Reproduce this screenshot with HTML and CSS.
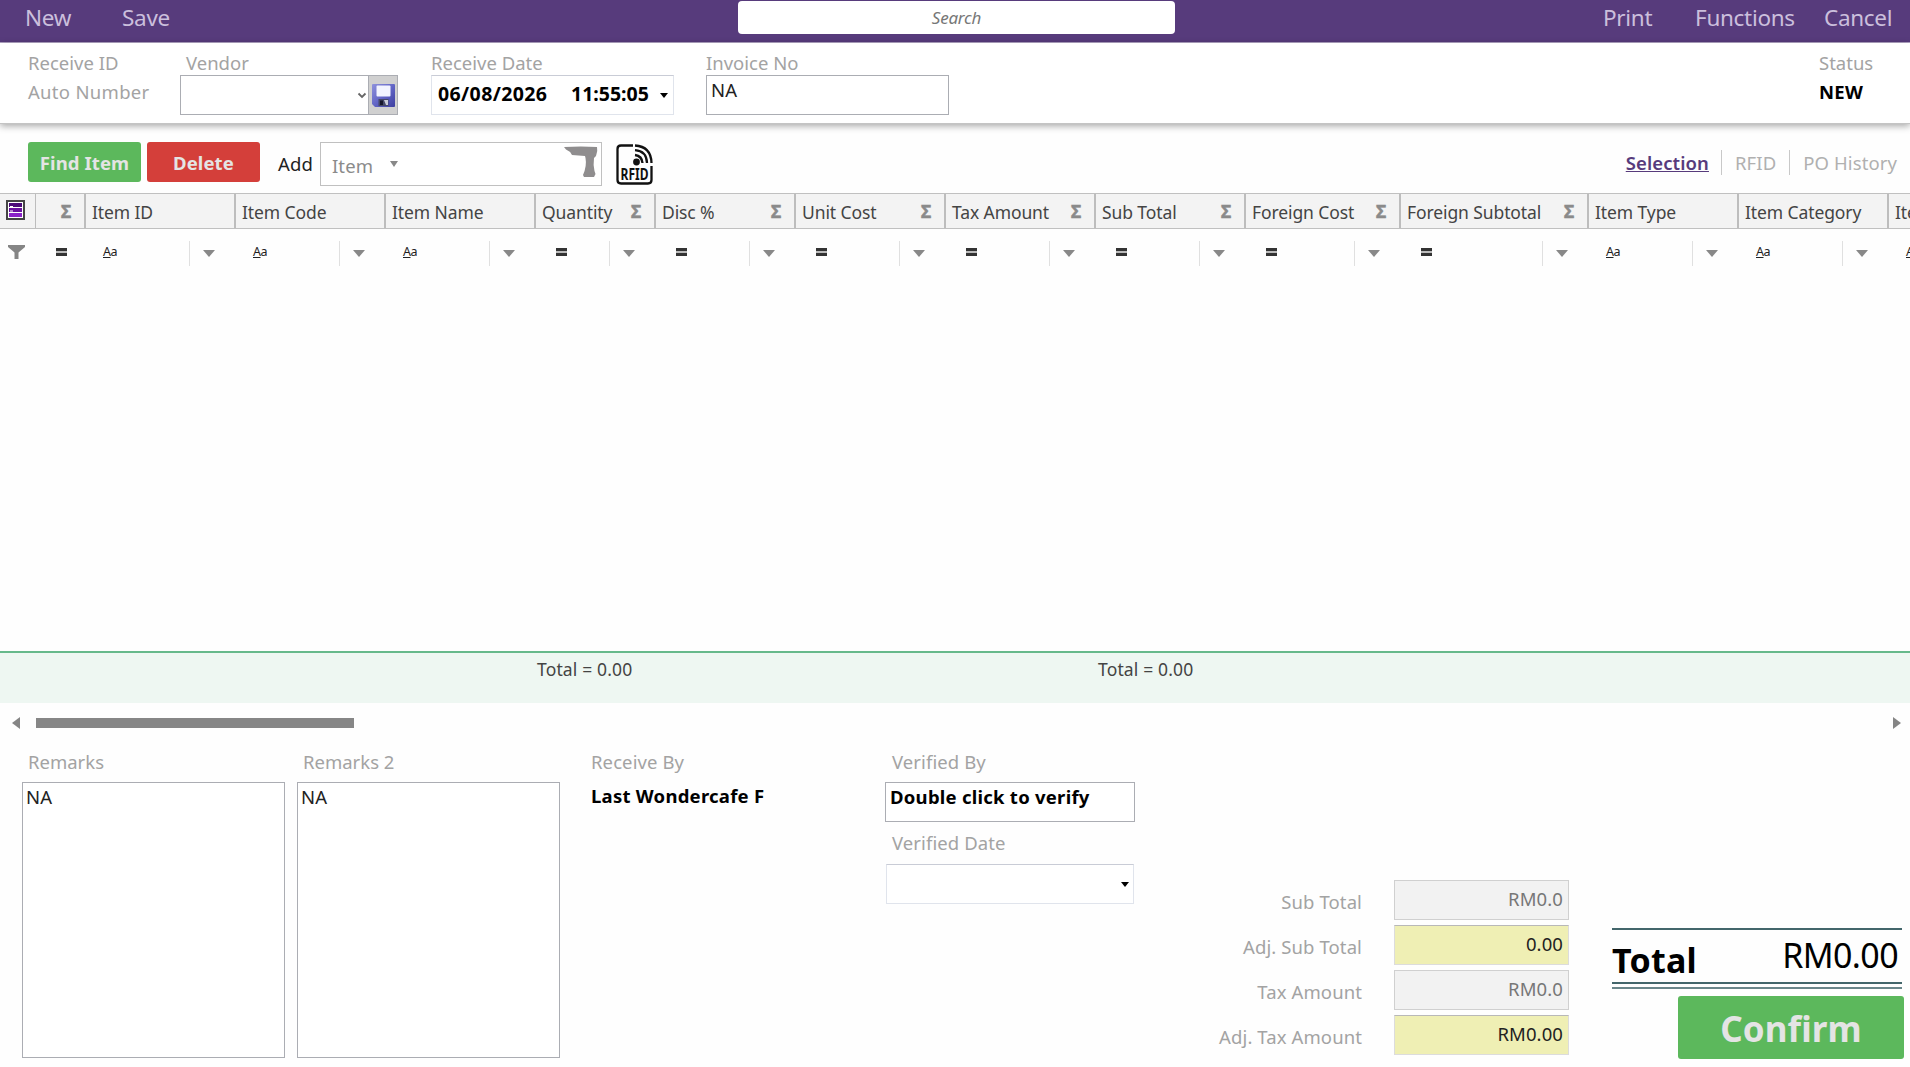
FILE: index.html
```
<!DOCTYPE html>
<html lang="en">
<head>
    <meta charset="UTF-8">
    <meta name="viewport" content="width=device-width, initial-scale=1.0">
    <title>Receive</title>
    <link rel="stylesheet" href="styles.css">
</head>
<body>
    <header class="topbar">
        <nav class="menu">
            <a class="menu-new">New</a>
            <a class="menu-save">Save</a>
        </nav>
        <div class="search">Search</div>
        <nav class="menu menu-right">
            <a class="menu-print">Print</a>
            <a class="menu-functions">Functions</a>
            <a class="menu-cancel">Cancel</a>
        </nav>
    </header>

    <section class="details">
        <div class="field">
            <label>Receive ID</label>
            <div class="plain muted auto-number">Auto Number</div>
        </div>
        <div class="field vendor">
            <label>Vendor</label>
            <div class="box combo">
                <svg class="chevron" width="10" height="7" viewBox="0 0 10 7"><path d="M1.5 1.5 5 5 8.500 1.5" fill="none" stroke="#666" stroke-width="1.800"/></svg>
                <span class="save-btn">
                    <svg width="23" height="23" viewBox="0 0 23 23">
                        <defs>
                            <linearGradient id="disk" x1="0" y1="0" x2="1" y2="1">
                                <stop offset="0" stop-color="#8f92dc"/>
                                <stop offset="0.500" stop-color="#6366c6"/>
                                <stop offset="1" stop-color="#3d3fa0"/>
                            </linearGradient>
                        </defs>
                        <path d="M1 0h21q1 0 1 1v21q0 1-1 1H3l-3-3V1q0-1 1-1z" fill="url(#disk)"/>
                        <rect x="4.500" y="1.500" width="14" height="11" rx="1" fill="#f2f4ff"/>
                        <rect x="6.500" y="15" width="10" height="7" fill="#454868"/>
                        <rect x="8" y="16.500" width="3" height="4.500" fill="#16172c"/>
                        <path d="M12 16h4v5h-2z" fill="#c9cbd8"/>
                    </svg>
                </span>
            </div>
        </div>
        <div class="field date">
            <label>Receive Date</label>
            <div class="box soft">
                <b class="day">06/08/2026</b>
                <b class="time">11:55:05</b>
                <i class="caret"></i>
            </div>
        </div>
        <div class="field invoice">
            <label>Invoice No</label>
            <div class="box text">NA</div>
        </div>
        <div class="field status">
            <label>Status</label>
            <div class="plain"><b>NEW</b></div>
        </div>
    </section>

    <section class="toolbar">
        <button class="btn green find">Find Item</button>
        <button class="btn red delete">Delete</button>
        <span class="add">Add</span>
        <div class="item-box">
            <span class="item-type">Item</span>
            <i class="caret grey"></i>
            <svg class="scanner" width="34" height="32" viewBox="0 0 34 32">
                <path d="M0 1Q17 0 33 1Q34 5 32 10L30 12Q29 19 30.500 25L31.500 28L30 31L20 31L19 29Q23 20 21.500 12L21 10L8 9Q6 5 2 3.500Z" fill="#8f8d8e"/>
            </svg>
        </div>
        <svg class="rfid" width="37" height="41" viewBox="0 0 37 41">
            <g fill="none" stroke="#111" stroke-width="2.300">
                <path d="M17 1.500H5Q1.500 1.500 1.500 5V36Q1.500 39.500 5 39.500H32Q35.500 39.500 35.500 36V22"/>
                <path d="M19 1.500Q35 2.500 35.500 19"/>
                <path d="M19 6.200Q30.500 7 31 19"/>
                <path d="M19 11Q26 12 26.500 19"/>
            </g>
            <circle cx="20.500" cy="18" r="3.400" fill="#111"/>
            <text x="4.500" y="35.500" textLength="28" lengthAdjust="spacingAndGlyphs" class="rfid-text">RFID</text>
        </svg>
        <div class="tabs">
            <a class="active">Selection</a>
            <a class="tab-rfid">RFID</a>
            <a class="tab-po">PO History</a>
        </div>
    </section>

    <section class="grid">
        <div class="row head">
            <div class="cell chooser">
                <svg width="19" height="20" viewBox="0 0 19 20">
                    <rect x="1" y="1" width="17" height="18" fill="#fff" stroke="#444" stroke-width="2"/>
                    <path d="M3 3h13v4H3z" fill="#4b0a78"/>
                    <path d="M3 8h13v4H3z" fill="#6a119f"/>
                    <path d="M3 13h13v4H3z" fill="#8a22c8"/>
                    <path d="M4 6.500h3M4 11h3M7 7.500h9M7 12.500h9" stroke="#fff" stroke-width="1.200"/>
                </svg>
            </div>
            <div class="cell"><i class="sigma">Σ</i></div>
            <div class="cell"><span>Item ID</span></div>
            <div class="cell"><span>Item Code</span></div>
            <div class="cell"><span>Item Name</span></div>
            <div class="cell"><span>Quantity</span><i class="sigma">Σ</i></div>
            <div class="cell"><span>Disc %</span><i class="sigma">Σ</i></div>
            <div class="cell"><span>Unit Cost</span><i class="sigma">Σ</i></div>
            <div class="cell"><span>Tax Amount</span><i class="sigma">Σ</i></div>
            <div class="cell"><span>Sub Total</span><i class="sigma">Σ</i></div>
            <div class="cell"><span>Foreign Cost</span><i class="sigma">Σ</i></div>
            <div class="cell"><span>Foreign Subtotal</span><i class="sigma">Σ</i></div>
            <div class="cell"><span>Item Type</span></div>
            <div class="cell"><span>Item Category</span></div>
            <div class="cell"><span>Item Brand</span></div>
        </div>
        <div class="row filter">
            <div class="cell funnel">
                <svg width="17" height="14" viewBox="0 0 17 14"><path d="M0 0H17V2L10.500 7.500V14H6.500V7.500L0 2Z" fill="#858585"/></svg>
            </div>
            <div class="cell first"><i class="eq"></i></div>
            <div class="cell"><span class="aa"><u>A</u>a</span><i class="drop"></i></div>
            <div class="cell"><span class="aa"><u>A</u>a</span><i class="drop"></i></div>
            <div class="cell"><span class="aa"><u>A</u>a</span><i class="drop"></i></div>
            <div class="cell"><i class="eq"></i><i class="drop"></i></div>
            <div class="cell"><i class="eq"></i><i class="drop"></i></div>
            <div class="cell"><i class="eq"></i><i class="drop"></i></div>
            <div class="cell"><i class="eq"></i><i class="drop"></i></div>
            <div class="cell"><i class="eq"></i><i class="drop"></i></div>
            <div class="cell"><i class="eq"></i><i class="drop"></i></div>
            <div class="cell"><i class="eq"></i><i class="drop"></i></div>
            <div class="cell"><span class="aa"><u>A</u>a</span><i class="drop"></i></div>
            <div class="cell"><span class="aa"><u>A</u>a</span><i class="drop"></i></div>
            <div class="cell"><span class="aa"><u>A</u>a</span></div>
        </div>
        <div class="rows"></div>
        <div class="row summary">
            <div class="cell sum-qty">Total = 0.00</div>
            <div class="cell sum-sub">Total = 0.00</div>
        </div>
        <div class="scrollbar">
            <i class="arrow-left"></i>
            <div class="thumb"></div>
            <i class="arrow-right"></i>
        </div>
    </section>

    <section class="bottom">
        <div class="remarks">
            <label>Remarks</label>
            <div class="area">NA</div>
        </div>
        <div class="remarks">
            <label>Remarks 2</label>
            <div class="area">NA</div>
        </div>
        <div class="receive-by">
            <label>Receive By</label>
            <b>Last Wondercafe F</b>
        </div>
        <div class="verified">
            <label>Verified By</label>
            <div class="box text"><b>Double click to verify</b></div>
            <label class="verified-date">Verified Date</label>
            <div class="box soft"><i class="caret"></i></div>
        </div>
        <div class="amounts">
            <label>Sub Total</label><div class="amount">RM0.0</div>
            <label>Adj. Sub Total</label><div class="amount edit">0.00</div>
            <label>Tax Amount</label><div class="amount">RM0.0</div>
            <label>Adj. Tax Amount</label><div class="amount edit">RM0.00</div>
        </div>
        <div class="total">
            <div class="total-line">
                <b>Total</b>
                <span>RM0.00</span>
            </div>
            <div class="double-line"></div>
            <button class="btn green confirm">Confirm</button>
        </div>
    </section>
</body>
</html>
```
FILE: styles.css
```
* {
    box-sizing: border-box;
}
body {
    margin: 0;
    width: 1910px;
    height: 1067px;
    overflow: hidden;
    background-color: #fefefe;
    font-family: "Noto Sans", "Open Sans", sans-serif;
    font-size: 18.5px;
    line-height: 20px;
    letter-spacing: 0.1px;
    color: #222;
    white-space: nowrap;
}
label {
    display: block;
    color: #a3a3a3;
}
b {
    color: #000;
    letter-spacing: 0.25px;
}

/* top bar */
.topbar {
    display: grid;
    grid-template-columns: 738px 437px 1fr;
    height: 43px;
    background-color: #573b7c;
    border-bottom: 1px solid #b3a6c6;
}
.menu {
    display: flex;
    padding-left: 25px;
    line-height: 36px;
    font-size: 22.5px;
    letter-spacing: -0.3px;
    color: #cbbfdc;
}
.menu-new {
    width: 97px;
}
.menu-right {
    padding-left: 428px;
}
.menu-print {
    width: 92px;
}
.menu-functions {
    width: 129px;
}
.search {
    height: 33px;
    margin-top: 1px;
    border-radius: 4px;
    background-color: #fff;
    color: #777;
    font-size: 17px;
    letter-spacing: -0.2px;
    font-style: italic;
    line-height: 33px;
    text-align: center;
}

/* receive details */
.details {
    display: grid;
    grid-template-columns: 152px 251px 275px 1113px 1fr;
    height: 81px;
    padding: 10px 0 0 28px;
    background-color: #fff;
    border-bottom: 1px solid #c4c4c4;
    box-shadow: 0 2px 7px rgba(0, 0, 0, 0.35);
}
.details label {
    letter-spacing: 0;
}
.plain {
    margin-top: 9px;
}
.muted {
    color: #a3a3a3;
}
.auto-number {
    letter-spacing: 0.3px;
}
.box {
    display: flex;
    height: 40px;
    margin-top: 2px;
    border: 1px solid #abadb3;
    background-color: #fff;
}
.box.text {
    padding: 4px 0 0 4px;
}
.box.soft {
    align-items: center;
    border-color: #c9ccd6 #e0e4ec #e0e4ec;
}
.vendor label {
    padding-left: 6px;
}
.vendor .box {
    width: 218px;
}
.combo {
    align-items: center;
    justify-content: flex-end;
}
.chevron {
    margin-right: 1px;
}
.save-btn {
    display: flex;
    align-items: center;
    justify-content: center;
    width: 29px;
    height: 38px;
    border-left: 1px solid #abadb3;
    background-color: #d0d0d0;
}
.date .box {
    width: 243px;
    padding: 0 0 2px 6px;
}
.date b {
    letter-spacing: 0.4px;
    font-size: 19.5px;
}
.day {
    width: 133px;
}
.date .time {
    width: 84px;
    letter-spacing: 0;
}
.date .caret {
    margin: 2px 0 0 5px;
}
.caret {
    border: 4px solid transparent;
    border-top: 5px solid #000;
    border-bottom: 0;
}
.caret.grey {
    border-top-color: #888;
    border-top-width: 6px;
}
.invoice .box {
    width: 243px;
}

/* toolbar */
.toolbar {
    display: flex;
    height: 69px;
    padding: 18px 13px 0 28px;
}
.btn {
    width: 113px;
    height: 40px;
    margin: 0 6px 0 0;
    padding: 0;
    border: 0;
    border-radius: 3px;
    color: #e4e4e4;
    font: bold 18.5px "Noto Sans", "Open Sans", sans-serif;
    letter-spacing: 0.1px;
}
.green {
    background-color: #5cb85c;
}
.red {
    background-color: #d43f3a;
}
.add {
    width: 42px;
    margin-left: 12px;
    line-height: 44px;
}
.item-box {
    display: flex;
    width: 282px;
    height: 44px;
    border: 1px solid #c0c0c0;
    background-color: #fff;
    color: #8b8b8b;
    line-height: 45px;
}
.item-type {
    width: 58px;
    margin-left: 11px;
}
.item-box .caret {
    margin: 18px 166px 0 0;
    height: 0;
}
.scanner {
    margin-top: 3px;
}
.rfid {
    margin: 2px 0 0 14px;
    overflow: visible;
}
.rfid-text {
    font-size: 16.5px;
    font-weight: bold;
    letter-spacing: 0;
    fill: #111;
}
.tabs {
    display: flex;
    margin: 8px 0 0 auto;
    line-height: 26px;
    color: #b0b0b0;
}
.tabs a {
    height: 25px;
    padding-left: 13px;
    border-left: 1px solid #c8c8c8;
}
.tabs .active {
    border: 0;
    padding-right: 12px;
    color: #573b7c;
    font-weight: 600;
    letter-spacing: 0.1px;
    text-decoration: underline;
}
.tab-rfid {
    padding-right: 13px;
}

/* item grid */
.row {
    display: grid;
    grid-template-columns: 36px 50px 150px 150px 150px 120px 140px 150px 150px 150px 155px 188px 150px 150px 150px;
    width: 1910px;
    overflow: hidden;
}
.cell {
    display: flex;
    align-items: center;
}
.head {
    height: 36px;
    border: solid #c0c0c0;
    border-width: 1px 0;
    background-color: #f3f3f3;
    color: #444;
    font-size: 17.5px;
    letter-spacing: -0.1px;
}
.head .cell {
    padding: 2px 13px 0 6px;
    border-right: 2px solid #bdbdbd;
}
.head .chooser {
    padding: 0 0 3px 6px;
    border-right-width: 1px;
}
.sigma {
    margin: 0 0 3px auto;
    color: #8a8a8a;
    font-size: 17.5px;
    font-style: normal;
    font-weight: bold;
    -webkit-text-stroke: 0.5px #8a8a8a;
}
.filter {
    height: 46px;
}
.filter .cell {
    padding: 0 0 0 20px;
}
.filter .funnel {
    padding-left: 8px;
}
.eq {
    width: 11px;
    height: 8px;
    border: solid #333;
    border-width: 3px 0;
    background-color: #bbb;
}
.aa {
    margin-left: -3px;
    font-size: 12.5px;
    letter-spacing: -0.5px;
}
.drop {
    display: flex;
    align-items: center;
    width: 47px;
    height: 25px;
    margin: 2px 0 0 auto;
    padding-left: 13px;
    border-left: 1px solid #e0e0e0;
}
.drop::before {
    content: "";
    border: 6.5px solid transparent;
    border-top: 7px solid #888;
    border-bottom: 0;
}
.rows {
    height: 376px;
}
.summary {
    height: 52px;
    border-top: 2px solid #66b98b;
    background-color: #eef7f2;
    color: #444;
    font-size: 17.5px;
}
.summary .cell {
    align-items: flex-start;
    padding: 6px 0 0 1px;
    letter-spacing: 0.15px;
}
.sum-qty {
    grid-column: 6;
}
.sum-sub {
    grid-column: 10;
}
.summary .sum-sub {
    padding-left: 2px;
}
.scrollbar {
    display: flex;
    align-items: center;
    height: 39px;
    padding: 0 9px 0 12px;
}
.arrow-left {
    border: 6px solid transparent;
    border-right: 8px solid #858585;
    border-left: 0;
}
.arrow-right {
    margin-left: auto;
    border: 6px solid transparent;
    border-left: 8px solid #858585;
    border-right: 0;
}
.thumb {
    width: 318px;
    height: 10px;
    margin-left: 16px;
    background-color: #868686;
}

/* bottom panel */
.bottom {
    display: grid;
    grid-template-columns: 275px 294px 294px 250px 434px 1fr;
    height: 325px;
    padding: 10px 6px 0 22px;
}
.remarks label {
    padding-left: 6px;
    letter-spacing: 0;
}
.area {
    width: 263px;
    height: 276px;
    margin-top: 10px;
    padding: 4px 0 0 3px;
    border: 1px solid #abadb3;
    background-color: #fff;
}
.receive-by b {
    display: block;
    margin-top: 14px;
}
.verified label {
    padding-left: 7px;
}
.verified .box {
    margin-top: 10px;
}
.verified .verified-date {
    margin-top: 11px;
}
.verified .soft {
    margin: 11px 1px 0;
    justify-content: flex-end;
    padding-right: 4px;
}
.amounts {
    display: grid;
    grid-template-columns: 1fr 175px;
    column-gap: 32px;
    row-gap: 5px;
    align-content: start;
    margin-top: 128px;
    text-align: right;
}
.amounts label {
    line-height: 43px;
    height: 40px;
}
.amount {
    height: 40px;
    padding-right: 5px;
    border: 1px solid #d0d0d0;
    background-color: #f2f2f2;
    color: #777;
    line-height: 36px;
}
.amount.edit {
    border-color: #b8b8b8 #dcdcdc #dcdcdc;
    background-color: #efefb4;
    color: #222;
}
.total {
    margin: 176px 0 0 43px;
}
.total-line {
    display: flex;
    justify-content: space-between;
    width: 290px;
    height: 56px;
    padding-right: 4px;
    border: solid #43666b;
    border-width: 2px 0;
    font-size: 34px;
    letter-spacing: -0.6px;
    line-height: 51px;
    color: #000;
}
.total-line b {
    line-height: 61px;
}
.double-line {
    width: 290px;
    height: 5px;
    border-bottom: 2px solid #6a868a;
}
.confirm {
    display: block;
    width: 226px;
    height: 63px;
    margin: 7px 0 0 66px;
    padding-top: 1px;
    font-size: 35px;
}
```
